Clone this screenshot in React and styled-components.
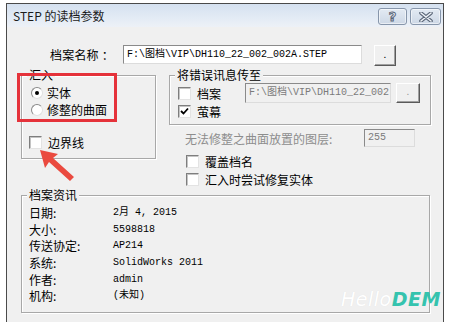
import React from "react";
import styled, { createGlobalStyle } from "styled-components";

const Global = createGlobalStyle`
  html, body { margin: 0; padding: 0; background: #ffffff; overflow: hidden; }
  body { font-family: "Noto Sans CJK SC", "Noto Sans", sans-serif; font-size: 12px; color: #000; }
`;

const Win = styled.div`
  position: relative;
  margin: 3px 0 0 6px;
  width: 436px;
  height: 330px;
  border: 1px solid #4a4a4a;
  border-bottom: none;
  background: #f0f0f0;
  display: flex;
  flex-direction: column;
`;

const TitleBar = styled.div`
  height: 23px;
  display: flex;
  align-items: flex-start;
  background: linear-gradient(#d5e1f0, #e3ebf5 60%, #edf1f7);
  padding: 0 2px 0 6px;
`;

const Title = styled.div`
  flex: 1;
  line-height: 23px;
  font-size: 12px;
  color: #1b1b1b;
`;

const CapBtn = styled.div`
  width: ${(p) => p.w}px;
  height: 17px;
  margin-top: 4px;
  margin-left: ${(p) => p.ml || 0}px;
  box-sizing: border-box;
  border: 1px solid #8796ab;
  border-radius: 3px;
  background: linear-gradient(#e3eaf3, #cdd8e6);
  box-shadow: inset 0 0 0 1px rgba(255,255,255,0.55);
  display: flex;
  align-items: center;
  justify-content: center;
`;

const Q = styled.span`
  font-family: "DejaVu Sans", sans-serif;
  font-weight: bold;
  font-size: 13px;
  color: #e9eef5;
  -webkit-text-stroke: 1px #5a6678;
  line-height: 1;
`;

const Client = styled.div`
  flex: 1;
  display: flex;
  flex-direction: column;
  padding: 18px 0 0 14px;
`;

const FileRow = styled.div`
  display: flex;
  align-items: flex-start;
  height: 21px;
  padding-left: 29px;
`;

const FileLabel = styled.div`
  width: 73px;
  line-height: 19px;
  letter-spacing: 0.2px;
`;

const Edit = styled.div`
  box-sizing: border-box;
  flex: none;
  width: ${(p) => p.w}px;
  height: ${(p) => p.h || 19}px;
  border: 1px solid;
  border-color: #8a8a8a #dcdcdc #dcdcdc #8a8a8a;
  background: ${(p) => (p.disabled ? "#f0f0f0" : "#ffffff")};
  color: ${(p) => (p.disabled ? "#7b7b7b" : "#000")};
  font-family: "Liberation Mono", "Noto Sans CJK SC", monospace;
  font-size: 10px;
  line-height: ${(p) => (p.h || 19) - 2}px;
  padding-left: 3px;
  white-space: nowrap;
  overflow: hidden;
`;

const DotBtn = styled.div`
  box-sizing: border-box;
  flex: none;
  width: ${(p) => p.w}px;
  height: ${(p) => p.h}px;
  margin-left: ${(p) => p.ml}px;
  border: 1px solid;
  border-color: #ffffff #5a5a5a #5a5a5a #ffffff;
  box-shadow: inset -1px -1px 0 #a0a0a0;
  background: #f0f0f0;
  color: ${(p) => (p.disabled ? "#9a9a9a" : "#000")};
  font-size: 10px;
  line-height: ${(p) => p.h - 6}px;
  text-align: center;
`;

const Middle = styled.div`
  display: grid;
  grid-template-columns: 135px 262px;
  column-gap: 13px;
  margin-top: 9px;
  align-items: start;
`;

const Group = styled.div`
  position: relative;
  box-sizing: border-box;
  width: ${(p) => p.w}px;
  height: ${(p) => p.h}px;
  margin-top: ${(p) => p.mt || 0}px;
  border: 1px solid #a8a8a8;
  box-shadow: 1px 1px 0 #ffffff, inset 1px 1px 0 #ffffff;
  padding: ${(p) => p.pad};
`;

const Legend = styled.div`
  position: absolute;
  top: -9px;
  left: 5px;
  padding: 0 2px;
  background: #f0f0f0;
  line-height: 16px;
  font-size: 12px;
`;

const Col = styled.div`
  display: flex;
  flex-direction: column;
`;

const Opt = styled.div`
  display: flex;
  align-items: center;
  height: ${(p) => p.h || 17}px;
  margin-top: ${(p) => p.mt || 0}px;
  color: ${(p) => (p.disabled ? "#8d8d8d" : "#000")};
  font-size: 12px;
  white-space: nowrap;
`;

const Radio = styled.span`
  box-sizing: border-box;
  width: 12px;
  height: 12px;
  border-radius: 50%;
  border: 1px solid;
  border-color: #8a8a8a #e0e0e0 #e0e0e0 #8a8a8a;
  background: #fff;
  margin: 0 4px 0 2px;
  display: flex;
  align-items: center;
  justify-content: center;
  &::after {
    content: "";
    width: 4px;
    height: 4px;
    border-radius: 50%;
    background: ${(p) => (p.on ? "#000" : "transparent")};
  }
`;

const Box = styled.span`
  box-sizing: border-box;
  width: 13px;
  height: 13px;
  border: 1px solid;
  border-color: #7e7e7e #e3e3e3 #e3e3e3 #7e7e7e;
  box-shadow: inset 1px 1px 0 #c4c4c4;
  background: #fff;
  margin-right: ${(p) => p.mr || 6}px;
  display: flex;
  align-items: center;
  justify-content: center;
`;

const ErrRow = styled.div`
  display: flex;
  align-items: flex-start;
`;

const Checks = styled.div`
  display: flex;
  flex-direction: column;
  width: 67px;
  flex: none;
  margin-top: 1px;
`;

const LayerRow = styled.div`
  display: grid;
  grid-template-columns: 179px 51px;
  padding-left: 16px;
  margin-top: 4px;
  align-items: center;
  color: #8d8d8d;
`;

const ExtraChecks = styled.div`
  display: flex;
  flex-direction: column;
  padding-left: 17px;
  margin-top: 5px;
`;

const InfoGrid = styled.div`
  display: grid;
  grid-template-columns: 84px 1fr;
  grid-auto-rows: 16.6px;
  align-items: center;
`;

const InfoLabel = styled.div`
  font-size: 12px;
  line-height: 16px;
`;

const InfoVal = styled.div`
  font-family: "Liberation Mono", "Noto Sans CJK SC", monospace;
  font-size: 10px;
  line-height: 16px;
`;

const RedFrame = styled.div`
  position: absolute;
  left: 10px;
  top: 69px;
  width: 100px;
  height: 49px;
  box-sizing: border-box;
  border: 3px solid #e5323a;
`;

const Arrow = styled.svg`
  position: absolute;
  left: 31px;
  top: 144px;
`;

const Mark = styled.div`
  position: absolute;
  left: 334px;
  top: 284px;
  font-family: "DejaVu Sans", sans-serif;
  font-style: italic;
  font-size: 19px;
  letter-spacing: 0.5px;
  white-space: nowrap;
`;

const Hello = styled.span`
  color: #ffffff;
  text-shadow: 0 0 1px rgba(0,0,0,0.08);
  font-weight: normal;
`;

const Dem = styled.span`
  color: #35c3ae;
  font-weight: bold;
`;

const Check = () => (
  <svg width="9" height="9" viewBox="0 0 9 9">
    <path d="M1 4 L3.5 6.5 L8 1.5" fill="none" stroke="#000" strokeWidth="1.8" />
  </svg>
);

const info = [
  ["日期:", "2月 4, 2015"],
  ["大小:", "5598818"],
  ["传送协定:", "AP214"],
  ["系统:", "SolidWorks 2011"],
  ["作者:", "admin"],
  ["机构:", "(未知)"],
];

export default function App() {
  return (
    <>
      <Global />
      <Win>
        <TitleBar>
          <Title>STEP 的读档参数</Title>
          <CapBtn w={29}>
            <Q>?</Q>
          </CapBtn>
          <CapBtn w={31} ml={3}>
            <svg width="14" height="10" viewBox="0 0 14 10">
              <path d="M2 1 L12 9 M12 1 L2 9" stroke="#5a6678" strokeWidth="3.6" strokeLinecap="round" />
              <path d="M2 1 L12 9 M12 1 L2 9" stroke="#eef2f7" strokeWidth="1.6" strokeLinecap="round" />
            </svg>
          </CapBtn>
        </TitleBar>
        <Client>
          <FileRow>
            <FileLabel>档案名称 ：</FileLabel>
            <Edit w={239}>F:\图档\VIP\DH110_22_002_002A.STEP</Edit>
            <DotBtn w={22} h={21} ml={12}>.</DotBtn>
          </FileRow>
          <Middle>
            <Group w={135} h={84} pad="8px 0 0 7px">
              <Legend>汇入</Legend>
              <Col>
                <Opt>
                  <Radio on />
                  实体
                </Opt>
                <Opt>
                  <Radio />
                  修整的曲面
                </Opt>
                <Opt mt={16}>
                  <Box mr={6} />
                  边界线
                </Opt>
              </Col>
            </Group>
            <Col>
              <Group w={262} h={50} pad="7px 0 0 8px">
                <Legend>将错误讯息传至</Legend>
                <ErrRow>
                  <Checks>
                    <Opt h={18}>
                      <Box />
                      档案
                    </Opt>
                    <Opt h={18}>
                      <Box>
                        <Check />
                      </Box>
                      萤幕
                    </Opt>
                  </Checks>
                  <Edit w={146} h={20} disabled>
                    F:\图档\VIP\DH110_22_002
                  </Edit>
                  <DotBtn w={24} h={20} ml={5} disabled>.</DotBtn>
                </ErrRow>
              </Group>
              <LayerRow>
                <span>无法修整之曲面放置的图层:</span>
                <Edit w={51} h={18} disabled>255</Edit>
              </LayerRow>
              <ExtraChecks>
                <Opt h={18}>
                  <Box />
                  覆盖档名
                </Opt>
                <Opt h={18}>
                  <Box />
                  汇入时尝试修复实体
                </Opt>
              </ExtraChecks>
            </Col>
          </Middle>
          <Group w={409} h={118} mt={7} pad="9px 0 0 7px">
            <Legend>档案资讯</Legend>
            <InfoGrid>
              {info.map(([k, v]) => (
                <React.Fragment key={k}>
                  <InfoLabel>{k}</InfoLabel>
                  <InfoVal>{v}</InfoVal>
                </React.Fragment>
              ))}
            </InfoGrid>
          </Group>
        </Client>
        <RedFrame />
        <Arrow width="40" height="36" viewBox="0 0 40 36">
          <path d="M2 2 L20 6 L15 10 L36 29 L32 33 L11 14 L7 20 Z" fill="#ea4a3f" />
        </Arrow>
        <Mark>
          <Hello>Hello</Hello>
          <Dem>DEM</Dem>
        </Mark>
      </Win>
    </>
  );
}
